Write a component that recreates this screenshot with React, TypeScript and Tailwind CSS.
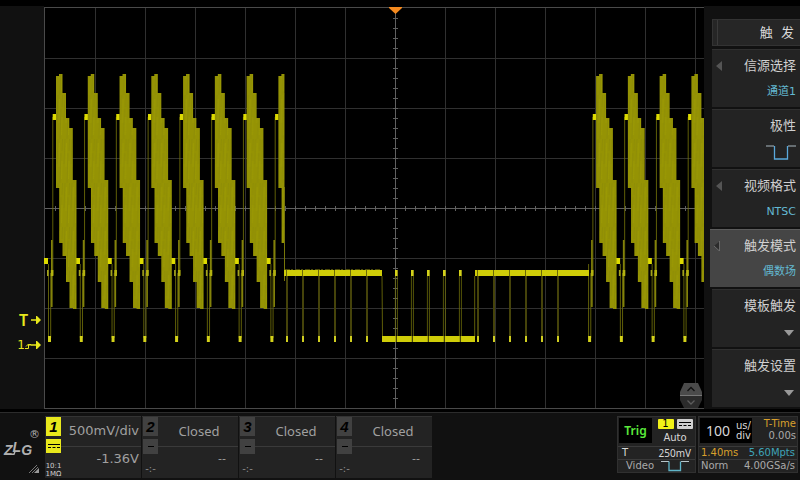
import type { ReactNode } from "react";

const PERIOD = 31.77;
const FIRST_BURST = 12;

// staircase outline of one line of colour bars, drawn from its own left edge
const BURST =
  "M0 69H3V67H6.5V86H10V111H13.3V121H16.8V173H20.5V302H17V301H13.5V275H10V249H6.5V236H3.2V181H0Z";

const leftLines = [0, 1, 2, 3, 4, 5, 6];
const rightLines = [17, 18, 19, 20];
const gridX = [51, 101, 151, 201, 251, 301, 351, 401, 451, 501, 551, 601, 651];
const gridY = [51, 101, 151, 201, 251, 301, 351];
const ticksX = Array.from({ length: 65 }, (_, i) => 11 + i * 10);
const ticksY = Array.from({ length: 39 }, (_, i) => 11 + i * 10);

const drops = [
  242, 258, 274, 290, 306, 322, 433, 449, 465, 481, 497, 513,
];
const serrations = [351, 367, 383, 399, 415];

const menu = [
  { name: "信源选择", value: "通道1", kind: "list" },
  { name: "极性", value: "pulse", kind: "pulse" },
  { name: "视频格式", value: "NTSC", kind: "list" },
  { name: "触发模式", value: "偶数场", kind: "list", active: true },
  { name: "模板触发", value: "", kind: "more" },
  { name: "触发设置", value: "", kind: "more" },
];

const channels = [
  { id: 1, scale: "500mV/div", offset: "-1.36V", on: true },
  { id: 2, scale: "Closed", offset: "--", on: false },
  { id: 3, scale: "Closed", offset: "--", on: false },
  { id: 4, scale: "Closed", offset: "--", on: false },
];

function Sync({ k }: { k: number }) {
  const x = FIRST_BURST + k * PERIOD;
  return (
    <g>
      <path
        d={`M${x - 7.5} 257V331M${x - 5.3} 266V331M${x - 3.2} 110V268`}
        stroke="#77760a"
        strokeWidth="0.8"
      />
      <rect x={x - 9} y="263" width="1.6" height="6" fill="#a3a31c" />
      <rect x={x - 5} y="233" width="1.6" height="67" fill="#83820a" />
      <rect x={x - 5.2} y="263" width="2.6" height="6" fill="#b4b210" />
      <rect x={x - 8} y="329" width="3" height="6" fill="#d4d21a" />
      <rect x={x - 3.3} y="107" width="3.5" height="6" fill="#dddb00" />
    </g>
  );
}

function Burst({ k }: { k: number }) {
  const x = FIRST_BURST + k * PERIOD;
  return (
    <g>
      <path d={BURST} transform={`translate(${x} 0)`} fill="url(#trace)" />
      <rect x={x + 20.2} y="251" width="3.8" height="6" fill="#dddb00" />
    </g>
  );
}

function Waveform() {
  return (
    <svg viewBox="0 0 660 402" className="block h-auto w-full bg-black" role="img" aria-label="CH1">
      <defs>
        <pattern id="trace" width="7" height="44" patternUnits="userSpaceOnUse">
          <rect width="7" height="44" fill="#959304" />
          <path d="M2 0L1 25M5 14L4 44M6.5 0L6 12" stroke="#8d8b06" strokeWidth="0.8" />
          <path d="M3.5 4L3 28M6 22L5.5 40" stroke="#9c9a04" strokeWidth="0.8" />
        </pattern>
        <clipPath id="fieldEnd">
          <rect x="0" y="0" width="240.5" height="240" />
        </clipPath>
      </defs>

      <g stroke="#303030" shapeRendering="crispEdges">
        {gridX.map((x) => (
          <path key={x} d={`M${x + 0.5} 0V402`} />
        ))}
        {gridY.map((y) => (
          <path key={y} d={`M0 ${y + 0.5}H660`} />
        ))}
      </g>
      <g stroke="#606060" shapeRendering="crispEdges">
        <path d="M0 201.5H660M351.5 0V402" />
        {ticksX.map((x) => (
          <path key={x} d={`M${x + 0.5} 199V204`} />
        ))}
        {ticksY.map((y) => (
          <path key={y} d={`M349 ${y + 0.5}H354`} />
        ))}
      </g>
      <path d="M0.5 402V0.5H660M0 401.5H660" fill="none" stroke="#4a4a4a" shapeRendering="crispEdges" />

      <rect x="0" y="251" width="4" height="6" fill="#dddb00" />
      {[...leftLines, 7, ...rightLines].map((k) => (
        <Sync key={k} k={k} />
      ))}
      {[...leftLines, ...rightLines].map((k) => (
        <Burst key={k} k={k} />
      ))}
      <g clipPath="url(#fieldEnd)">
        <Burst k={7} />
      </g>
      <path d="M240.5 180V274" stroke="#77760a" />

      {/* equalising pulses */}
      <path d="M241 262.5H337" stroke="#4c4b08" strokeDasharray="5 1 2 2" />
      <rect x="240" y="263" width="98" height="6" fill="#cfcd08" />
      <rect x="431" y="263" width="114" height="6" fill="#cfcd08" />
      <path d="M338 269L338.5 330M430.7 269V330" stroke="#77760a" strokeWidth="0.8" />
      {drops.map((x) => (
        <g key={x}>
          <rect x={x} y="263" width="1" height="6" fill="#6b6a08" />
          <rect x={x} y="269" width="2" height="60" fill="#45430a" />
          <rect x={x} y="329" width="2" height="6" fill="#d0ce20" />
        </g>
      ))}

      {/* vertical sync */}
      <rect x="338" y="329" width="93" height="6" fill="#cfcd08" />
      {serrations.map((x) => (
        <g key={x}>
          <rect x={x + 0.8} y="329" width="1" height="6" fill="#2b2a05" />
          <path d={`M${x + 0.4} 269V329M${x + 2.4} 269V329`} stroke="#6a690a" strokeWidth="0.8" />
          <rect x={x} y="263" width="2.7" height="6" fill="#d4d21a" />
        </g>
      ))}

      <path d="M345 0H358V1L351.5 7L345 1Z" fill="#f58a1f" />
    </svg>
  );
}

function Pulse({ className }: { className: string }) {
  return (
    <svg viewBox="0 0 30 15" className={className} fill="none" aria-hidden="true">
      <path d="M0 1H8M22 1H30" stroke="#a9b8c0" />
      <path d="M8.5 1V14H21.5V1" stroke="#5aa9dc" strokeWidth="1.3" />
    </svg>
  );
}

function MenuItem({ item }: { item: (typeof menu)[number] }) {
  return (
    <button
      type="button"
      className={`flex h-[58px] flex-col items-end justify-between border-t pt-2 pr-1 pb-[7px] text-right ${
        item.active ? "-ml-0.5 border-[#5c5c5c] bg-[#454545]" : "border-[#303030] bg-[#232323]"
      }`}
    >
      <span className="flex w-full items-center justify-between pl-1">
        <svg viewBox="0 0 6 10" className="h-2.5 w-1.5" aria-hidden="true">
          {item.kind === "list" && <path d="M6 0V10L0 5Z" fill={item.active ? "#2c2c2c" : "#555"} />}
          {item.active && <path d="M5.5 0V10L0 5" fill="none" stroke="#777" strokeWidth="0.8" />}
        </svg>
        <span className="text-[13px] leading-4 text-[#d0d0d0]">{item.name}</span>
      </span>
      {item.kind === "list" && <span className="text-[11px] leading-4 text-[#63b9d2]">{item.value}</span>}
      {item.kind === "pulse" && <Pulse className="h-[15px] w-[30px]" />}
      {item.kind === "more" && (
        <svg viewBox="0 0 10 6" className="mr-0.5 mb-1 h-1.5 w-2.5" aria-hidden="true">
          <path d="M0 0H10L5 6Z" fill="#999" />
        </svg>
      )}
    </button>
  );
}

function Coupling({ className }: { className: string }) {
  return (
    <svg viewBox="0 0 12 5" className={className} stroke="currentColor" aria-hidden="true">
      <path d="M0 0.5H12M0 3.5H3M4.5 3.5H7.5M9 3.5H12" />
    </svg>
  );
}

function Channel({ ch }: { ch: (typeof channels)[number] }) {
  const tab = ch.on ? "bg-[#e8e81c] text-black" : "bg-[#414141] text-black";
  return (
    <button type="button" className="flex h-[62px] w-24 border-t border-[#333] bg-[#232323] pl-px text-[#a0a0a0]">
      <span className="flex w-[15px] flex-col items-center gap-[3px]">
        <span className={`h-[19px] w-full text-center font-['Liberation_Sans'] text-[15px] leading-5 font-bold italic ${tab}`}>
          {ch.id}
        </span>
        <span className={`flex h-[15px] w-full items-center justify-center ${tab}`}>
          {ch.on ? <Coupling className="h-[5px] w-3" /> : <span className="h-px w-1.5 bg-black" />}
        </span>
        {ch.on ? (
          <span className="pt-1.5 text-[7px] leading-2 text-[#d0d0d0]">
            10:1
            <br />
            1MΩ
          </span>
        ) : (
          <span className="pt-1.5 text-[10px] leading-3 text-[#888]">-:-</span>
        )}
      </span>
      <span className="flex flex-1 flex-col">
        <span
          className={`h-[30px] border-b border-[#3a3a3a] text-[13px] leading-7 ${
            ch.on ? "pr-0.5 text-right" : "pl-0.5 text-center font-['Noto_Sans']"
          }`}
        >
          {ch.scale}
        </span>
        <span className={`text-right leading-6 ${ch.on ? "pr-0.5 text-[13px]" : "pr-3 text-[11px]"}`}>{ch.offset}</span>
      </span>
    </button>
  );
}

function Marker({ children }: { children: ReactNode }) {
  return (
    <div className="flex h-5 items-center justify-end text-[#e8e81c]">
      {children}
      <svg viewBox="0 0 10 8" className="h-2 w-2.5" aria-hidden="true">
        <path d="M0 3.3H5V0H6L10 4L6 8H5V4.7H0Z" fill="currentColor" />
      </svg>
    </div>
  );
}

function Logo() {
  return (
    <svg viewBox="0 0 44 68" className="h-[68px] w-11 shrink-0" role="img" aria-label="ZLG">
      <text x="4" y="42" fontSize="14" fill="#b0b0b0" fontFamily="Liberation Sans, sans-serif" fontWeight="bold" fontStyle="italic">
        Z<tspan dy="-3">L</tspan><tspan dy="3">G</tspan>
      </text>
      <path d="M5 41.3H14L15 38.5" fill="none" stroke="#b0b0b0" strokeWidth="1.4" />
      <text x="29" y="25" fontSize="11" fill="#b0b0b0" fontFamily="DejaVu Sans, sans-serif">®</text>
      <path d="M29 60L37 52M32 60L38 54" stroke="#777" />
      <path d="M34 60L39 55V60Z" fill="#999" />
    </svg>
  );
}

export default function App() {
  return (
    <div className="flex min-h-screen flex-col bg-black font-['DejaVu_Sans','Noto_Sans_CJK_SC',sans-serif]">
      <main className="flex pt-[6px]">
        <aside className="flex w-11 flex-col justify-end gap-[5px] bg-[#111] pr-[3px] pb-[54px]">
          <Marker>
            <span className="pr-[3px] font-['Noto_Sans'] text-base leading-5 font-semibold">T</span>
          </Marker>
          <Marker>
            <span className="text-xs leading-5">1</span>
            <svg viewBox="0 0 6 8" className="h-2 w-1.5" fill="none" stroke="currentColor" aria-hidden="true">
              <path d="M0 7.5H3.5V3.5H6M1 5.5L3.5 3L5.5 5" />
            </svg>
          </Marker>
        </aside>

        <section className="relative min-w-0 flex-1 pt-px">
          <Waveform />
          <div className="absolute right-[2px] bottom-0 flex flex-col">
            <button type="button" aria-label="Up">
              <svg viewBox="0 0 22 13" className="h-[13px] w-[22px]">
                <path d="M4 0H18L22 9V12H0V9Z" fill="#4b4b4b" />
                <path d="M0 12.5H22" stroke="#777" />
                <path d="M7.5 8L11 4.5L14.5 8" fill="none" stroke="#111" strokeWidth="1.3" />
              </svg>
            </button>
            <button type="button" aria-label="Down">
              <svg viewBox="0 0 22 13" className="h-[13px] w-[22px]">
                <path d="M0 0H22V4L18 12H4L0 4Z" fill="#2b2b2b" />
                <path d="M7.5 4.5L11 8L14.5 4.5" fill="none" stroke="#5c5c5c" strokeWidth="1.3" />
              </svg>
            </button>
          </div>
        </section>

        <nav className="flex w-24 flex-col gap-0.5 bg-[#111] pt-[13px] pl-2">
          <h1 className="mb-px flex h-[27px] items-center justify-end border border-r-0 border-[#333] bg-[#262626] pr-1.5 text-[13px] text-[#d8d8d8]">
            <span className="mr-auto ml-1 h-full w-px bg-[#3a3a3a]" />
            触&nbsp; 发
          </h1>
          {menu.map((item) => (
            <MenuItem key={item.name} item={item} />
          ))}
        </nav>
      </main>

      <footer className="mt-[3px] flex flex-1 border-t border-[#2c2c2c] bg-[#111]">
        <Logo />
        <div className="flex gap-px pt-[3px] pl-px">
          {channels.map((ch) => (
            <Channel key={ch.id} ch={ch} />
          ))}
        </div>

        <div className="ml-auto flex items-start gap-0.5 pt-[3px] pr-0.5 text-[10px] leading-3 text-[#aaa]">
          <section className="w-[79px] border border-[#303030] bg-[#232323]">
            <div className="flex h-[29px] gap-1 p-px">
              <button type="button" className="h-[25px] w-[33px] bg-black font-['Noto_Sans'] text-xs font-semibold text-[#5bea3c]">
                Trig
              </button>
              <div className="flex flex-1 flex-col items-center gap-[3px] pt-px">
                <div className="flex gap-[3px]">
                  <span className="h-2.5 w-4 rounded-[1px] bg-[#f2f218] text-center leading-2.5 text-black">1</span>
                  <span className="flex h-2.5 w-4 items-center justify-center rounded-[1px] bg-[#d0d0d0] text-black">
                    <Coupling className="h-[5px] w-3" />
                  </span>
                </div>
                <span className="text-[#d8d8d8]">Auto</span>
              </div>
            </div>
            <div className="flex h-[13px] justify-between border-t border-[#3a3a3a] px-1 text-[#d8d8d8]">
              <span>T</span>
              <span className="font-['Noto_Sans']">250mV</span>
            </div>
            <div className="flex h-[13px] justify-between border-t border-[#3a3a3a] px-1.5 pl-2">
              <span>Video</span>
              <svg viewBox="0 0 28 12" className="h-3 w-7" fill="none" aria-hidden="true">
                <path d="M0 1.5H8M20 1.5H28" stroke="#b8c4c8" />
                <path d="M8 1.5V10.5H19.5V1.5" stroke="#5fb4c8" strokeWidth="1.3" />
              </svg>
            </div>
          </section>

          <section className="w-[100px] border border-[#303030] bg-[#232323]">
            <div className="flex h-[29px] justify-between p-px">
              <button type="button" className="flex h-[25px] w-[52px] items-center justify-between bg-black pr-px pl-1.5 text-[#d8d8d8]">
                <span className="font-['Noto_Sans'] text-sm">100</span>
                <span className="text-left leading-2.5">
                  us/
                  <br />
                  div
                </span>
              </button>
              <div className="flex flex-col text-right">
                <span className="text-[#d9a02c]">T-Time</span>
                <span>0.00s</span>
              </div>
            </div>
            <div className="flex h-[13px] justify-between border-t border-[#3a3a3a] px-0.5">
              <span className="text-[#d9a02c]">1.40ms</span>
              <span className="text-[#3fa3b8]">5.60Mpts</span>
            </div>
            <div className="flex h-[13px] justify-between border-t border-[#3a3a3a] px-0.5">
              <span>Norm</span>
              <span>4.00GSa/s</span>
            </div>
          </section>
        </div>
      </footer>
    </div>
  );
}
